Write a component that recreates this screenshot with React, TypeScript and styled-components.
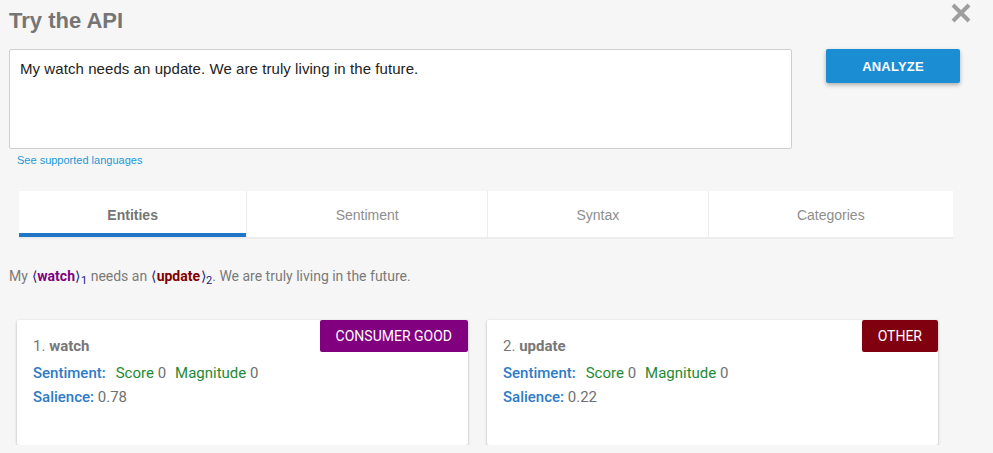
import { createGlobalStyle, styled } from "styled-components";

const GlobalStyle = createGlobalStyle`
  html, body {
    margin: 0;
    padding: 0;
    background: #f6f6f6;
  }
`;

type Entity = {
  name: string;
  type: string;
  color: string;
  salience: string;
};

const entities: Entity[] = [
  { name: "watch", type: "CONSUMER GOOD", color: "#800080", salience: "0.78" },
  { name: "update", type: "OTHER", color: "#800010", salience: "0.22" },
];

const tabs = ["Entities", "Sentiment", "Syntax", "Categories"];

export default function App() {
  return (
    <Page>
      <GlobalStyle />
      <TitleRow>
        <Title>Try the API</Title>
        <CloseButton aria-label="close">
          <svg width="22" height="22" viewBox="0 0 22 22">
            <path
              d="M3 3 L19 19 M19 3 L3 19"
              stroke="#9e9e9e"
              strokeWidth="4"
              strokeLinecap="butt"
            />
          </svg>
        </CloseButton>
      </TitleRow>

      <InputRow>
        <InputColumn>
          <TextInput defaultValue="My watch needs an update. We are truly living in the future." />
          <LangLink>See supported languages</LangLink>
        </InputColumn>
        <AnalyzeButton>ANALYZE</AnalyzeButton>
      </InputRow>

      <Tabs>
        {tabs.map((t, i) => (
          <Tab key={t} $active={i === 0}>
            {t}
          </Tab>
        ))}
      </Tabs>

      <Sentence>
        My <Bracket>⟨</Bracket>
        <Mention $color="#800080">watch</Mention>
        <Bracket>⟩</Bracket>
        <Sub>1</Sub> needs an <Bracket>⟨</Bracket>
        <Mention $color="#800000">update</Mention>
        <Bracket>⟩</Bracket>
        <Sub>2</Sub>. We are truly living in the future.
      </Sentence>

      <Cards>
        {entities.map((e, i) => (
          <Card key={e.name}>
            <Badge $color={e.color}>{e.type}</Badge>
            <CardTitle>
              {i + 1}. <b>{e.name}</b>
            </CardTitle>
            <InfoLine>
              <Label>Sentiment:</Label>
              <Green>Score</Green> 0
              <Green $spaced>Magnitude</Green> 0
            </InfoLine>
            <InfoLine>
              <Label $tight>Salience:</Label> {e.salience}
            </InfoLine>
          </Card>
        ))}
      </Cards>
    </Page>
  );
}

const Page = styled.div`
  padding: 0 0 0 9px;
  width: 984px;
  box-sizing: border-box;
  font-family: "Liberation Sans", Arial, sans-serif;
`;

const TitleRow = styled.div`
  display: flex;
  justify-content: space-between;
  align-items: flex-start;
  height: 49px;
  padding-right: 12px;
`;

const Title = styled.h1`
  margin: 0;
  padding-top: 6px;
  font-size: 22px;
  line-height: 30px;
  font-weight: bold;
  color: #757575;
`;

const CloseButton = styled.div`
  margin-top: 2px;
  width: 22px;
  height: 22px;
`;

const InputRow = styled.div`
  display: flex;
  align-items: flex-start;
  gap: 34px;
`;

const InputColumn = styled.div`
  display: flex;
  flex-direction: column;
  width: 783px;
`;

const TextInput = styled.textarea`
  box-sizing: border-box;
  width: 783px;
  height: 100px;
  resize: none;
  border: 1px solid #cfcfcf;
  border-radius: 2px;
  background: #fff;
  padding: 10px 10px;
  margin: 0;
  font-family: "Liberation Sans", Arial, sans-serif;
  font-size: 15px;
  letter-spacing: 0.07px;
  line-height: 18px;
  color: #222;
  outline: none;
`;

const LangLink = styled.a`
  margin: 4px 0 0 8px;
  font-size: 11px;
  line-height: 15px;
  color: #1a9ad6;
  cursor: pointer;
`;

const AnalyzeButton = styled.button`
  width: 134px;
  height: 34px;
  border: none;
  border-radius: 2px;
  background: #1a8dd3;
  color: #fff;
  font-family: "Liberation Sans", Arial, sans-serif;
  font-weight: bold;
  font-size: 13px;
  letter-spacing: 0.2px;
  box-shadow: 0 2px 4px rgba(0, 0, 0, 0.3);
  cursor: pointer;
`;

const Tabs = styled.div`
  display: flex;
  gap: 1px;
  margin: 23px 0 0 10px;
  width: 934px;
  background: #ececec;
  padding-bottom: 2px;
`;

const Tab = styled.div<{ $active?: boolean }>`
  flex: 1 1 auto;
  height: 46px;
  box-sizing: border-box;
  display: flex;
  align-items: center;
  justify-content: center;
  padding-top: 5px;
  background: #fff;
  font-size: 14px;
  color: ${(p) => (p.$active ? "#757575" : "#8e8e8e")};
  font-weight: ${(p) => (p.$active ? "bold" : "normal")};
  border-bottom: ${(p) => (p.$active ? "4px solid #2176c7" : "none")};
  padding-bottom: ${(p) => (p.$active ? "0" : "4px")};
`;

const Sentence = styled.p`
  margin: 27px 0 0 0;
  font-family: Roboto, "Noto Sans", sans-serif;
  font-size: 14px;
  line-height: 20px;
  color: #7a7a7a;
`;

const Bracket = styled.span`
  color: #1a237e;
  margin: 0 0.5px;
`;

const Mention = styled.b<{ $color: string }>`
  color: ${(p) => p.$color};
  font-weight: bold;
`;

const Sub = styled.sub`
  color: #1a237e;
  font-size: 11px;
  vertical-align: -3px;
  line-height: 0;
`;

const Cards = styled.div`
  display: flex;
  gap: 19px;
  margin: 34px 0 0 8px;
`;

const Card = styled.div`
  position: relative;
  box-sizing: border-box;
  width: 451px;
  height: 125px;
  background: #fff;
  border-radius: 2px;
  box-shadow: 0 1px 3px rgba(0, 0, 0, 0.28);
  padding: 16px 16px 0;
  font-family: Roboto, "Noto Sans", sans-serif;
  font-size: 15px;
  color: #6f6f6f;
`;

const Badge = styled.div<{ $color: string }>`
  position: absolute;
  top: 0;
  right: 0;
  height: 32px;
  padding: 0 16px;
  display: flex;
  align-items: center;
  background: ${(p) => p.$color};
  border-radius: 2px;
  color: #fff;
  font-size: 14px;
`;

const CardTitle = styled.div`
  line-height: 20px;
  margin-bottom: 5px;
  color: #777;

  b {
    font-weight: bold;
  }
`;

const InfoLine = styled.div`
  line-height: 24px;
  color: #6f6f6f;
`;

const Label = styled.span<{ $tight?: boolean }>`
  color: #2e7bc6;
  font-weight: 500;
  margin-right: ${(p) => (p.$tight ? "0" : "10px")};
`;

const Green = styled.span<{ $spaced?: boolean }>`
  color: #1e8a36;
  margin-left: ${(p) => (p.$spaced ? "9px" : "0")};
`;
